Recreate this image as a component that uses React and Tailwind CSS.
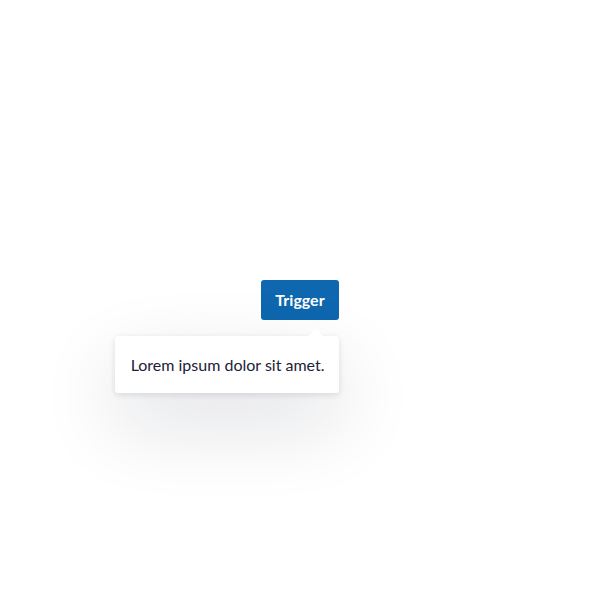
import React from "react";

const App = () => {
  return (
    <div
      className="flex h-[600px] w-[600px] items-center justify-center bg-white"
      style={{ fontFamily: "Lato, 'Open Sans', sans-serif" }}
    >
      <div className="relative">
        <button className="h-10 rounded-[3px] bg-[#0e67af] px-[14px] text-[16px] font-bold text-white">
          Trigger
        </button>

        {/* Popover */}
        <div className="absolute right-0 top-[56px] w-[224px] rounded-[3px] bg-white px-4 py-[18px] shadow-[0_2px_6px_rgba(15,23,42,0.12),0_30px_80px_rgba(15,23,42,0.14)]">
          <div className="absolute -top-[5px] right-[18px] h-[11px] w-[11px] rotate-45 bg-white" />
          <p className="relative whitespace-nowrap text-[16px] leading-[21px] text-[#1b2238]">
            Lorem ipsum dolor sit amet.
          </p>
        </div>
      </div>
    </div>
  );
};

export default App;
